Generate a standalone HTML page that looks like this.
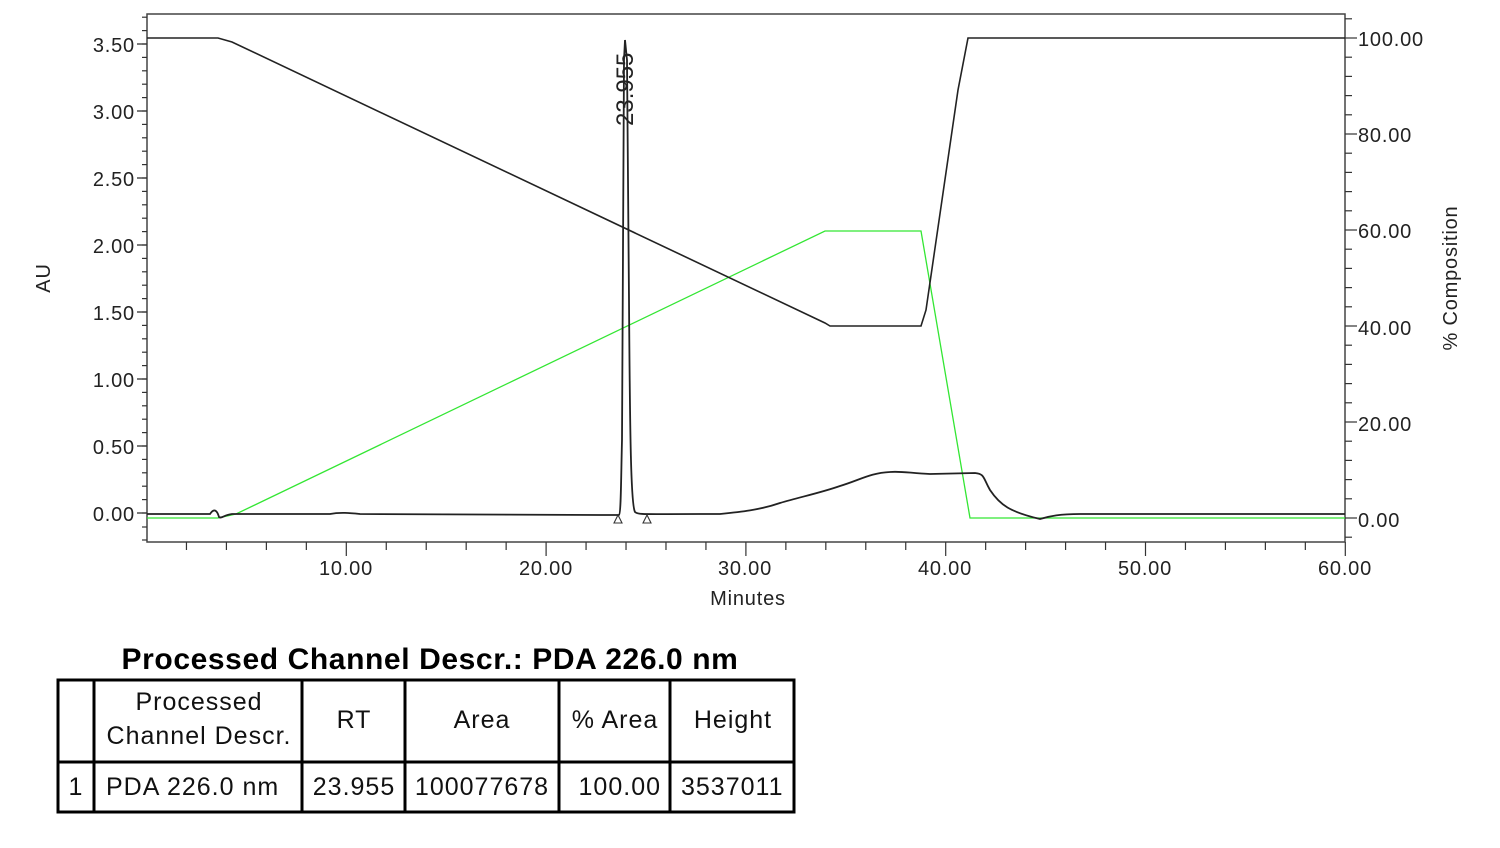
<!DOCTYPE html>
<html><head><meta charset="utf-8"><style>
body{margin:0;background:#fff;width:1500px;height:848px;overflow:hidden;font-family:"Liberation Sans",sans-serif}
svg{position:absolute;left:0;top:0}
</style></head><body>
<svg width="1500" height="848" font-family="Liberation Sans, sans-serif">
<g stroke="#444" stroke-width="1.5" fill="none">
<rect x="147" y="14" width="1198" height="528"/>
</g>
<g stroke="#333" stroke-width="1.3">
<line x1="137" y1="44" x2="147" y2="44"/><line x1="137" y1="111" x2="147" y2="111"/><line x1="137" y1="178" x2="147" y2="178"/><line x1="137" y1="245" x2="147" y2="245"/><line x1="137" y1="312" x2="147" y2="312"/><line x1="137" y1="379" x2="147" y2="379"/><line x1="137" y1="446" x2="147" y2="446"/><line x1="137" y1="513" x2="147" y2="513"/>
</g>
<g stroke="#333" stroke-width="1.2" id="minor"></g>
<g font-size="20" fill="#222" text-anchor="end" letter-spacing="0.8">
<text x="135" y="52">3.50</text><text x="135" y="119">3.00</text><text x="135" y="186">2.50</text><text x="135" y="253">2.00</text><text x="135" y="320">1.50</text><text x="135" y="387">1.00</text><text x="135" y="454">0.50</text><text x="135" y="521">0.00</text>
</g>
<g font-size="20" fill="#222" letter-spacing="0.8">
<text x="1358" y="46">100.00</text><text x="1358" y="142">80.00</text><text x="1358" y="238">60.00</text><text x="1358" y="335">40.00</text><text x="1358" y="431">20.00</text><text x="1358" y="527">0.00</text>
</g>
<g font-size="20" fill="#222" text-anchor="middle" letter-spacing="0.8">
<text x="346" y="575">10.00</text><text x="546" y="575">20.00</text><text x="745" y="575">30.00</text><text x="945" y="575">40.00</text><text x="1145" y="575">50.00</text><text x="1345" y="575">60.00</text>
<text x="748" y="605">Minutes</text>
<text transform="translate(50,278) rotate(-90)">AU</text>
<text transform="translate(1457,278) rotate(-90)">% Composition</text>
</g>
<text transform="translate(633,126) rotate(-90)" font-size="24" fill="#222">23.955</text>
<polyline fill="none" stroke="#33e633" stroke-width="1.3" points="147,518 218,518 236,514 825,231 921,231 970,518 1345,518"/>
<polyline fill="none" stroke="#222" stroke-width="1.6" points="147,38 218,38 232,42 825,323 830,326 921,326 926,310 958,90 968,38 1345,38"/>
<path fill="none" stroke="#222" stroke-width="1.8" d="M147,514 L210,514 C214,508 217,510 219,517 C221,519 224,515 232,514 L330,514 C340,512 350,513 360,514 L600,515 L619,515 C621,514 621,480 622,440 L624,60 L625,40 L627,60 L629,300 C630,440 631,505 635,512 C638,515 645,514 700,514 L720,514 C740,512 760,510 780,503 C800,497 820,493 840,486 C860,480 870,473 890,472 C900,471 910,473 930,474 L975,473 C985,474 983,478 990,490 C1000,505 1010,512 1040,519 C1050,516 1060,514 1080,514 L1345,514"/>
<path fill="#fff" stroke="#333" stroke-width="1.1" d="M614,523 L618,515 L622,523 Z M643,523 L647,515 L651,523 Z"/>
<text x="430" y="669" font-size="30" font-weight="bold" text-anchor="middle" fill="#000" letter-spacing="0.6">Processed Channel Descr.: PDA 226.0 nm</text>
<g stroke="#000" stroke-width="3" fill="none">
<rect x="58" y="680" width="736" height="132"/>
<line x1="58" y1="762" x2="794" y2="762"/>
<line x1="94" y1="680" x2="94" y2="812"/><line x1="302" y1="680" x2="302" y2="812"/><line x1="405" y1="680" x2="405" y2="812"/><line x1="559" y1="680" x2="559" y2="812"/><line x1="670" y1="680" x2="670" y2="812"/>
</g>
<g font-size="25" fill="#111" text-anchor="middle" letter-spacing="1">
<text x="199" y="710">Processed</text><text x="199" y="744">Channel Descr.</text>
<text x="354" y="728">RT</text><text x="482" y="728">Area</text><text x="615" y="728">% Area</text><text x="733" y="728">Height</text>
<text x="76" y="795">1</text><text x="354" y="795">23.955</text><text x="482" y="795">100077678</text>
</g>
<g font-size="25" fill="#111" letter-spacing="1">
<text x="106" y="795">PDA 226.0 nm</text>
<text x="661" y="795" text-anchor="end">100.00</text>
<text x="681" y="795">3537011</text>
</g>
</svg>
<script>
var g=document.getElementById('minor'),s='';
for(var i=0;i<=39;i++){var y=513-i*13.4;if(y<16)break;s+='<line x1="142" y1="'+y+'" x2="147" y2="'+y+'"/>';}
y=540;s+='<line x1="142" y1="'+y+'" x2="147" y2="'+y+'"/>';y=527;s+='<line x1="142" y1="'+y+'" x2="147" y2="'+y+'"/>';
for(var p=-4;p<=104;p+=4){var yy=518-p*4.8;if(yy<16||yy>540)continue;var L=(p%20==0)?12:7;s+='<line x1="1345" y1="'+yy+'" x2="'+(1345+L)+'" y2="'+yy+'"/>';}
for(var m=2;m<=60;m+=2){var x=146.5+m*19.98;var L=(m%10==0)?14:8;s+='<line x1="'+x+'" y1="542" x2="'+x+'" y2="'+(542+L)+'"/>';}
g.innerHTML=s;
</script>
</body></html>
